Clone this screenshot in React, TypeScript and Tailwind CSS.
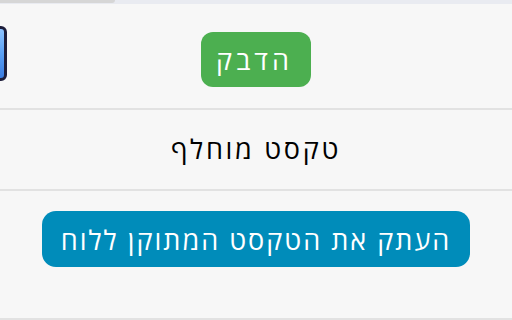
import React from "react";

export default function App() {
  return (
    <div
      className="w-[512px] h-[320px] overflow-hidden bg-[#f7f7f7] flex flex-col"
      style={{ fontFamily: '"Open Sans", "DejaVu Sans", sans-serif' }}
    >
      {/* top edge of a scrolled-off field */}
      <div className="h-[4px] w-full bg-[#e9ebf1] flex shrink-0">
        <div className="w-[115px] h-[3px] bg-[#d6d6d6] rounded-br-[4px]" />
      </div>

      {/* row 1 */}
      <div className="h-[106px] shrink-0 flex items-start justify-center pt-[28px] relative border-b-2 border-[#e2e2e2]">
        <div className="absolute left-[-20px] top-[22px] w-[27px] h-[55px] rounded-[6px] border-[3px] border-[#1d1d3a] bg-gradient-to-b from-[#8ec4ff] via-[#5aa0f5] to-[#3a7be0]" />
        <button
          dir="rtl"
          className="w-[110px] h-[55px] rounded-[12px] bg-[#4caf50] text-white text-[27px] tracking-[4px] leading-none pr-[3px]"
        >
          הדבק
        </button>
      </div>

      {/* row 2 */}
      <div
        dir="rtl"
        className="h-[81px] shrink-0 flex items-center justify-center border-b-2 border-[#e2e2e2] text-[27px] tracking-[2.7px] text-black"
      >
        טקסט מוחלף
      </div>

      {/* row 3 */}
      <div className="flex-1 flex justify-center pt-[20px] border-b-2 border-[#e2e2e2]">
        <button
          dir="rtl"
          className="w-[428px] h-[56px] rounded-[14px] bg-[#008cba] text-white text-[27px] tracking-[2px] leading-none"
        >
          העתק את הטקסט המתוקן ללוח
        </button>
      </div>
    </div>
  );
}
